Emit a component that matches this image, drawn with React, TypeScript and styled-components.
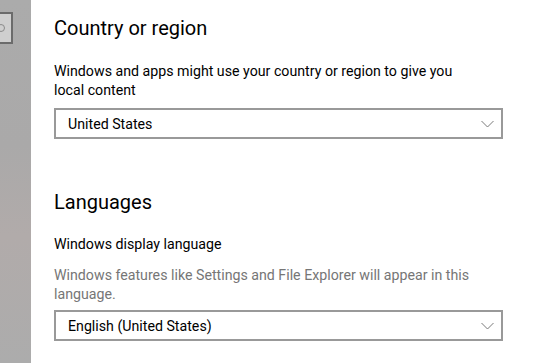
import styled, { createGlobalStyle } from 'styled-components';

const GlobalStyle = createGlobalStyle`
    html, body {
        margin: 0;
        padding: 0;
        background-color: #ffffff;
        font-family: Roboto, 'Noto Sans', sans-serif;
    }
`;

const Shell = styled.div`
    display: flex;
    width: 558px;
    height: 363px;
    overflow: hidden;
`;

const Sidebar = styled.aside`
    width: 31px;
    flex: 0 0 31px;
    padding-top: 12px;
    box-sizing: border-box;
    background: linear-gradient(180deg, #ababab 0%, #aaa9a9 40%, #b1abaa 65%, #acacac 100%);
    overflow: hidden;
`;

const SearchBox = styled.div`
    width: 15px;
    height: 32px;
    box-sizing: border-box;
    margin-left: -2px;
    border: 2px solid #6b6b6b;
    background-color: #cfcfcf;
    display: flex;
    align-items: center;
    justify-content: flex-start;
`;

const Main = styled.main`
    flex: 1;
    padding: 14px 0 0 23px;
`;

const Section = styled.section`
    & + & {
        margin-top: 49px;
    }
`;

const Heading = styled.h2`
    margin: 0;
    font-size: 20px;
    font-weight: 400;
    line-height: 28px;
    color: #000000;
`;

const Label = styled.div`
    margin-top: 19px;
    font-size: 14.2px;
    line-height: 19px;
    color: #000000;
`;

const Description = styled.p<{ $muted?: boolean; $gap: number }>`
    margin: ${(p) => p.$gap}px 0 0;
    font-size: 14.2px;
    line-height: 19px;
    color: ${(p) => (p.$muted ? '#767676' : '#000000')};
`;

const Select = styled.div<{ $gap: number }>`
    margin-top: ${(p) => p.$gap}px;
    width: 449px;
    height: 31px;
    box-sizing: border-box;
    border: 2px solid #999999;
    background: #ffffff;
    display: flex;
    align-items: center;
    justify-content: space-between;
    padding: 0 7px 0 12px;
    font-size: 14.2px;
    color: #000000;
`;

const Chevron = () => (
    <svg width="13" height="8" viewBox="0 0 13 8" fill="none">
        <path d="M0.5 1 L6.5 7 L12.5 1" stroke="#7a7a7a" strokeWidth="1" />
    </svg>
);

const SearchGlyph = () => (
    <svg width="8" height="10" viewBox="0 0 8 10" fill="none">
        <circle cx="1" cy="5" r="3.5" stroke="#8a8a8a" strokeWidth="1" />
    </svg>
);

export default function App() {
    return (
        <>
            <GlobalStyle />
            <Shell>
                <Sidebar>
                    <SearchBox>
                        <SearchGlyph />
                    </SearchBox>
                </Sidebar>
                <Main>
                    <Section>
                        <Heading>Country or region</Heading>
                        <Description $gap={20}>
                            Windows and apps might use your country or region to give you
                            <br />
                            local content
                        </Description>
                        <Select $gap={8}>
                            <span>United States</span>
                            <Chevron />
                        </Select>
                    </Section>
                    <Section>
                        <Heading>Languages</Heading>
                        <Label>Windows display language</Label>
                        <Description $muted $gap={12}>
                            Windows features like Settings and File Explorer will appear in this
                            <br />
                            language.
                        </Description>
                        <Select $gap={6}>
                            <span>English (United States)</span>
                            <Chevron />
                        </Select>
                    </Section>
                </Main>
            </Shell>
        </>
    );
}
